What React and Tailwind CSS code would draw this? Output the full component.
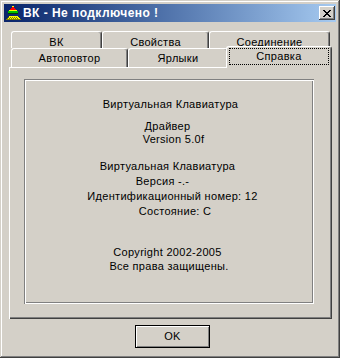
import React from "react";

const raised =
  "shadow-[inset_-1px_-1px_#404040,inset_1px_1px_#ffffff,inset_-2px_-2px_#808080]";

// Classic tab: white left/top edge, dark double right edge
const Tab = ({ label, w, pt = "pt-[4px]" }) => (
  <div
    className={`${w} h-full flex justify-center ${pt} leading-[13px] border-l border-t border-white border-r border-r-[#404040] rounded-t-[3px] shadow-[inset_-1px_0_#808080] bg-[#d4d0c8]`}
  >
    {label}
  </div>
);

const Line = ({ children, className = "" }) => (
  <div className={`h-[13px] leading-[13px] whitespace-nowrap ${className}`}>
    {children}
  </div>
);

const AppIcon = () => (
  <svg width="16" height="16" viewBox="0 0 16 16" shapeRendering="crispEdges">
    <path d="M8 1 L11 5 L5 5 Z" fill="#ff0000" />
    <rect x="7" y="1" width="2" height="1" fill="#ffff00" />
    <rect x="4" y="5" width="8" height="1" fill="#ffff00" />
    <rect x="3" y="6" width="10" height="2" fill="#00c000" />
    <rect x="3" y="8" width="10" height="1" fill="#004000" />
    <path d="M4 11 L12 11 L15 14 L1 14 Z" fill="#ffff00" />
    <path
      d="M3 12h1M5 12h1M7 12h1M9 12h1M11 12h1M2 13h1M4 13h1M6 13h1M8 13h1M10 13h1M12 13h1"
      stroke="#808000"
      strokeWidth="1"
    />
    <rect x="1" y="14" width="15" height="1" fill="#808000" />
  </svg>
);

const App = () => {
  return (
    <div
      className={`w-[340px] h-[358px] bg-[#d4d0c8] p-[4px] flex flex-col text-[11px] tracking-[0.3px] text-black shadow-[inset_-1px_-1px_#404040,inset_1px_1px_#d4d0c8,inset_-2px_-2px_#808080,inset_2px_2px_#ffffff]`}
      style={{ fontFamily: '"Liberation Sans", Arial, sans-serif' }}
    >
      {/* Title bar */}
      <div className="h-[18px] flex items-center bg-linear-to-r from-[#0a246a] to-[#a6caf0]">
        <div className="ml-[1px] w-[16px] h-[16px]">
          <AppIcon />
        </div>
        <div className="ml-[2px] text-white font-bold text-[12px] tracking-[0.45px] leading-[18px] whitespace-nowrap">
          ВК - Не подключено !
        </div>
        <div
          className={`ml-auto mr-[1px] w-[16px] h-[14px] bg-[#d4d0c8] flex items-center justify-center ${raised}`}
        >
          <svg width="8" height="7" viewBox="0 0 8 7" shapeRendering="crispEdges">
            <path
              d="M0 0h2v1h-2zM6 0h2v1h-2zM1 1h2v1h-2zM5 1h2v1h-2zM2 2h4v1h-4zM3 3h2v1h-2zM2 4h4v1h-4zM1 5h2v1h-2zM5 5h2v1h-2zM0 6h2v1h-2zM6 6h2v1h-2z"
              fill="#000"
            />
          </svg>
        </div>
      </div>

      {/* Tab control */}
      <div className="ml-[5px] w-[323px] mt-[9px] flex flex-col">
        <div className="flex pl-[2px] h-[17px]">
          <Tab label="ВК" w="w-[91px]" />
          <Tab label="Свойства" w="w-[107px]" />
          <Tab label="Соединение" w="w-[121px]" />
        </div>
        <div className="flex items-start pl-[2px] h-[19px]">
          <Tab label="Автоповтор" w="w-[117px]" pt="pt-[3px]" />
          <Tab label="Ярлыки" w="w-[100px]" pt="pt-[3px]" />
          <div className="relative z-10 -ml-[2px] -mt-[2px] w-[106px] h-[22px] flex pt-[1px] pb-[3px] px-[2px] border-l border-t border-white border-r border-r-[#404040] rounded-t-[3px] shadow-[inset_-1px_0_#808080] bg-[#d4d0c8]">
            <div className="flex-1 flex justify-center pt-[1px] leading-[13px] border border-dotted border-black">
              Справка
            </div>
          </div>
        </div>

        {/* Panel */}
        <div className="h-[252px] bg-[#d4d0c8] pt-[12px] pl-[15px] shadow-[inset_1px_1px_#ffffff,inset_-1px_-1px_#404040,inset_-2px_-2px_#808080]">
          <div className="w-[290px] h-[225px] flex flex-col items-center shadow-[inset_1px_1px_#808080,inset_-1px_-1px_#ffffff,inset_2px_2px_#ffffff,inset_-2px_-2px_#808080]">
            <Line className="mt-[19px] ml-[3px]">Виртуальная Клавиатура</Line>
            <Line className="mt-[9px] mr-[3px]">Драйвер</Line>
            <Line className="ml-[9px]">Version 5.0f</Line>
            <Line className="mt-[14px] mr-[3px]">Виртуальная Клавиатура</Line>
            <Line className="mt-[2px] mr-[13px]">Версия -.-</Line>
            <Line className="mt-[2px] ml-[7px]">Идентификационный номер: 12</Line>
            <Line className="mt-[2px] ml-[12px]">Состояние: С</Line>
            <Line className="mt-[28px] mr-[3px]">Copyright 2002-2005</Line>
            <Line className="mt-[1px]">Все права защищены.</Line>
          </div>
        </div>
      </div>

      {/* OK button */}
      <div className="mt-[6px] ml-[131px] w-[75px] h-[23px] border border-black bg-[#d4d0c8] flex items-center justify-center shadow-[inset_1px_1px_#ffffff,inset_-1px_-1px_#808080] leading-[13px]">
        OK
      </div>
    </div>
  );
};

export default App;
